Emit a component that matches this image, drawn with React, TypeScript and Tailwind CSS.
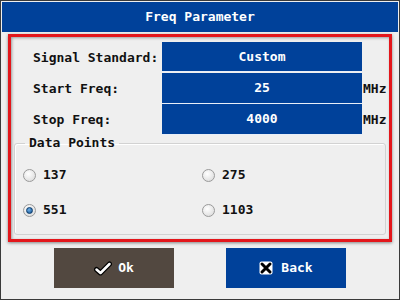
import React from "react"

const mono = { fontFamily: '"DejaVu Sans Mono", "Liberation Mono", monospace' }

function Radio({ label, checked }: { label: string; checked?: boolean }) {
  return (
    <div className="flex items-center h-[20px]">
      <div className="w-[13px] h-[13px] rounded-full border border-[#9a9a9a] bg-[radial-gradient(circle_at_40%_35%,#ffffff,#d6d6d6)] flex items-center justify-center">
        {checked && (
          <div className="w-[7px] h-[7px] rounded-full bg-[radial-gradient(circle_at_40%_35%,#6fb0e8,#0d4c8c)] border border-[#0a3a6a]" />
        )}
      </div>
      <span className="ml-[7px] text-[13px] font-bold text-[#111]">{label}</span>
    </div>
  )
}

function FieldRow({ label, value, unit, first }: { label: string; value: string; unit?: string; first?: boolean }) {
  return (
    <div className="flex items-stretch h-[31px]">
      <div className="w-[151px] pl-[22px] flex items-center text-[13px] font-bold text-[#111] whitespace-nowrap">{label}</div>
      <div
        className={
          first
            ? "w-[200px] h-[30px] bg-[#00419a] flex items-center justify-center text-white text-[13px] font-bold border-b border-[#e8eef8]"
            : "w-[200px] h-[31px] bg-[#00419a] flex items-center justify-center text-white text-[13px] font-bold border-b border-[#e8eef8]"
        }
      >
        {value}
      </div>
      <div className="ml-[1px] flex items-center text-[13px] font-bold text-[#111]">{unit}</div>
    </div>
  )
}

export default function App() {
  return (
    <div className="w-[400px] h-[300px] bg-[#efefef] border border-[#3a3a3a] p-[1px] flex flex-col overflow-hidden" style={mono}>
      <div className="h-[30px] bg-[#00419a] flex items-center justify-center text-white text-[13px] font-bold">
        Freq Parameter
      </div>

      <div className="mt-[2px] mx-[6px] h-[208px] border-[3px] border-[#e3161b] shadow-[0_1px_3px_rgba(0,0,0,0.45),inset_1px_1px_3px_rgba(0,0,0,0.35)] flex flex-col">
        <div className="pt-[5px] flex flex-col">
          <FieldRow label="Signal Standard:" value="Custom" first />
          <FieldRow label="Start Freq:" value="25" unit="MHz" />
          <FieldRow label="Stop Freq:" value="4000" unit="MHz" />
        </div>

        <fieldset className="mx-[3px] mb-[4px] flex-1 border border-[#d2d2d2] rounded-[3px] shadow-[inset_1px_1px_0_#ffffff] px-[8px]">
          <legend className="ml-[2px] px-[4px] text-[13px] font-bold text-[#111] leading-[16px]">Data Points</legend>
          <div className="pt-[14px] flex flex-col gap-[15px]">
            <div className="flex">
              <div className="w-[179px]"><Radio label="137" /></div>
              <Radio label="275" />
            </div>
            <div className="flex">
              <div className="w-[179px]"><Radio label="551" checked /></div>
              <Radio label="1103" />
            </div>
          </div>
        </fieldset>
      </div>

      <div className="mt-[6px] flex justify-center gap-[52px]">
        <button className="w-[120px] h-[40px] bg-[#524840] flex items-center justify-center gap-[6px] text-white text-[13px] font-bold">
          <svg width="18" height="15" viewBox="0 0 18 15">
            <path d="M2.5 8.5 L6.5 12 L15.5 3" fill="none" stroke="#000" strokeWidth="5" strokeLinecap="round" strokeLinejoin="round" />
            <path d="M2.5 8.5 L6.5 12 L15.5 3" fill="none" stroke="#fff" strokeWidth="2.5" strokeLinecap="round" strokeLinejoin="round" />
          </svg>
          <span>Ok</span>
        </button>
        <button className="w-[120px] h-[40px] bg-[#00419a] flex items-center justify-center gap-[8px] text-white text-[13px] font-bold">
          <svg width="14" height="14" viewBox="0 0 14 14">
            <rect x="0.5" y="0.5" width="13" height="13" rx="2" fill="#fff" />
            <path d="M3 3 L11 11 M11 3 L3 11" stroke="#000" strokeWidth="3" strokeLinecap="round" />
          </svg>
          <span>Back</span>
        </button>
      </div>
    </div>
  )
}
